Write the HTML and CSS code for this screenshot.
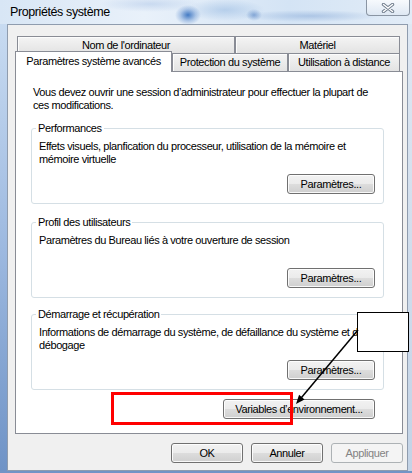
FILE: index.html
```html
<!DOCTYPE html>
<html lang="fr">
<head>
<meta charset="utf-8">
<title>Propriétés système</title>
<link rel="stylesheet" href="styles.css">
</head>
<body>
<div class="window">
  <div class="titlebar">
    <span class="title">Propriétés système</span>
    <div class="close">
      <svg width="14" height="10" viewBox="0 0 14 10">
        <path d="M2.5 1.5 L11.5 8.5 M11.5 1.5 L2.5 8.5" stroke="#6f7c8c" stroke-width="3.4" stroke-linecap="round" fill="none"/>
        <path d="M2.5 1.5 L11.5 8.5 M11.5 1.5 L2.5 8.5" stroke="#ffffff" stroke-width="1.5" stroke-linecap="round" fill="none"/>
      </svg>
    </div>
  </div>
  <div class="main">
    <div class="frame-left"></div>
    <div class="dialog">
      <div class="tabs">
        <div class="tabrow back">
          <div class="tab t-nom">Nom de l'ordinateur</div>
          <div class="tab t-mat">Matériel</div>
        </div>
        <div class="tabrow front">
          <div class="tab selected">Paramètres système avancés</div>
          <div class="tab t-prot">Protection du système</div>
          <div class="tab t-util">Utilisation à distance</div>
        </div>
      </div>
      <div class="panel">
        <p class="intro">Vous devez ouvrir une session d’administrateur pour effectuer la plupart de ces modifications.</p>
        <fieldset class="group">
          <legend>Performances</legend>
          <p>Effets visuels, planfication du processeur, utilisation de la mémoire et mémoire virtuelle</p>
          <div class="btnrow"><button class="btn b-param">Paramètres...</button></div>
        </fieldset>
        <fieldset class="group g2">
          <legend>Profil des utilisateurs</legend>
          <p>Paramètres du Bureau liés à votre ouverture de session</p>
          <div class="btnrow"><button class="btn b-param">Paramètres...</button></div>
        </fieldset>
        <fieldset class="group g3">
          <legend>Démarrage et récupération</legend>
          <p>Informations de démarrage du système, de défaillance du système et de débogage</p>
          <div class="btnrow"><button class="btn b-param">Paramètres...</button></div>
        </fieldset>
        <div class="btnrow env"><button class="btn b-env">Variables d’environnement...</button></div>
      </div>
      <div class="actions">
        <button class="btn b-act">OK</button>
        <button class="btn b-act">Annuler</button>
        <button class="btn b-act" disabled>Appliquer</button>
      </div>
    </div>
    <div class="frame-right"></div>
  </div>
  <div class="frame-bottom"></div>
  <svg class="annot" width="412" height="473" viewBox="0 0 412 473">
    <rect x="112.5" y="393.5" width="179" height="30" fill="none" stroke="#ff0000" stroke-width="3"/>
    <rect x="357.5" y="312.5" width="51" height="39" fill="#ffffff" stroke="#000000" stroke-width="1"/>
    <line x1="358" y1="330" x2="301.5" y2="397.5" stroke="#000000" stroke-width="1.5"/>
    <polygon points="296,404 304.5,399.4 299.1,394.8" fill="#000000"/>
  </svg>
</div>
</body>
</html>
```
FILE: styles.css
```css
* { box-sizing: border-box; }
html, body { margin: 0; padding: 0; }
body {
  width: 412px;
  height: 473px;
  overflow: hidden;
  font-family: "Liberation Sans", Arial, sans-serif;
  font-size: 11px;
  letter-spacing: -0.4px;
  color: #000;
  background: #dfe9f5;
}
.window {
  position: relative;
  width: 412px;
  height: 473px;
  display: flex;
  flex-direction: column;
}
.titlebar {
  height: 24px;
  flex: none;
  display: flex;
  align-items: flex-start;
  background:
    radial-gradient(13px 10px at 188px 15px, rgba(50,110,190,0.9), rgba(80,130,200,0.35) 60%, rgba(80,130,200,0)),
    radial-gradient(8px 6px at 254px 15px, rgba(70,120,190,0.55), rgba(70,120,190,0)),
    radial-gradient(70px 6px at 310px 16px, rgba(110,150,205,0.4), rgba(110,150,205,0)),
    radial-gradient(40px 11px at 225px 10px, rgba(150,185,225,0.55), rgba(150,185,225,0)),
    radial-gradient(50px 8px at 150px 4px, rgba(170,195,230,0.5), rgba(170,195,230,0)),
    linear-gradient(to right, #d8e6f5, #e9f1fa 35%, #d4e4f5 70%, #e2ecf7);
}
.title {
  margin: 4px 0 0 10px;
  font-size: 12.5px;
  line-height: 16px;
  letter-spacing: -0.4px;
}
.close {
  margin-left: auto;
  margin-right: 2px;
  width: 44px;
  height: 16px;
  border: 1px solid #8a95a3;
  border-top: none;
  border-radius: 0 0 4px 4px;
  background: linear-gradient(rgba(255,255,255,0.75), rgba(222,231,242,0.75));
  display: flex;
  align-items: center;
  justify-content: center;
}
.main {
  flex: 1;
  display: flex;
}
.frame-left {
  width: 7px;
  background: linear-gradient(#c8dbf1, #9db9e0 50%, #6f93c6);
}
.frame-right {
  width: 4px;
  background: linear-gradient(#dfe8f3, #c3d3e6);
}
.frame-bottom {
  height: 2px;
  flex: none;
  background: #7294c6;
}
.dialog {
  flex: 1;
  border: 1px solid #8f9cae;
  background: #f0f0f0;
  padding: 11px 4px 7px 7px;
  display: flex;
  flex-direction: column;
}
.tabs {
  display: flex;
  flex-direction: column;
}
.tabrow {
  display: flex;
  padding-left: 2px;
}
.tab {
  border: 1px solid #898c95;
  border-bottom: none;
  background: linear-gradient(#f4f4f4, #e3e3e3);
  box-shadow: inset 1px 1px 0 #fcfcfc;
  text-align: center;
  white-space: nowrap;
}
.tabrow.back .tab {
  height: 17px;
  line-height: 16px;
}
.t-nom { width: 218px; }
.t-mat { width: 165px; }
.tabrow.front {
  height: 18px;
  align-items: flex-end;
}
.tabrow.front .tab {
  height: 18px;
  line-height: 17px;
}
.t-prot { width: 116px; }
.t-util { width: 112px; }
.tabrow.front .tab.selected {
  position: relative;
  z-index: 1;
  width: 157px;
  height: 21px;
  line-height: 19px;
  margin: 0 0 -1px -2px;
  background: #fff;
  box-shadow: none;
}
.panel {
  height: 363px;
  flex: none;
  border: 1px solid #898c95;
  background: #fff;
  padding: 14px 18px 0 15px;
}
.intro {
  margin: 0 8px 0 2px;
  line-height: 13px;
}
.group {
  margin: 10px 0 0;
  padding: 0 8px 9px 7px;
  border: 1px solid #d5dfe5;
  border-radius: 3px;
}
.group.g2 { margin-top: 12px; }
.group.g3 { margin-top: 10px; }
.group legend {
  padding: 0 2px;
  margin-left: -3px;
  line-height: 13px;
}
.group p {
  margin: 5px 0 0;
  line-height: 13px;
  min-height: 26px;
}
.btnrow {
  display: flex;
  justify-content: flex-end;
  margin-top: 8px;
}
.btnrow.env {
  margin-top: 9px;
  padding-right: 9px;
}
.btn {
  height: 20px;
  padding: 0;
  border: 1px solid #707070;
  border-radius: 3px;
  background: linear-gradient(#f2f2f2, #ebebeb 50%, #dddddd 50%, #cfcfcf);
  box-shadow: inset 0 0 0 1px rgba(255,255,255,0.85);
  font: inherit;
  letter-spacing: inherit;
  color: #000;
  display: flex;
  align-items: center;
  justify-content: center;
}
.b-param { width: 88px; }
.b-env { width: 152px; }
.actions {
  display: flex;
  justify-content: flex-end;
  gap: 8px;
  margin-top: 9px;
}
.b-act { width: 72px; }
.btn:disabled {
  color: #838383;
  border-color: #adb2b5;
  background: #f4f4f4;
  box-shadow: none;
}
.annot {
  position: absolute;
  top: 0;
  left: 0;
  pointer-events: none;
}
```
